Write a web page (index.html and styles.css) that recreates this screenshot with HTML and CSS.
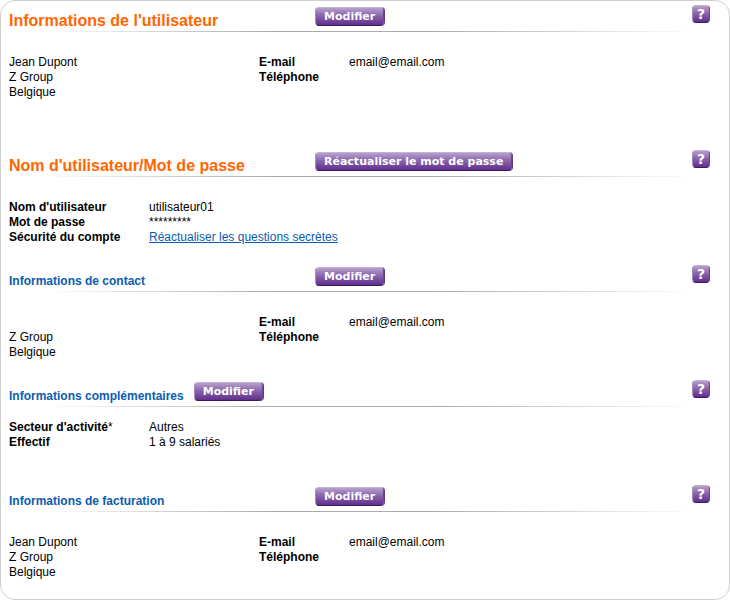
FILE: index.html
```html
<!DOCTYPE html>
<html lang="fr">
<head>
<meta charset="utf-8">
<title>Mon compte</title>
<link rel="stylesheet" href="styles.css">
</head>
<body>
<main class="panel">
  <section class="section section-spaced">
    <header class="head">
      <h1 class="title title-main">Informations de l'utilisateur</h1>
      <button class="btn" type="button">Modifier</button>
      <button class="help" type="button">?</button>
    </header>
    <div class="body contact">
      <address class="address">Jean Dupont<br>Z Group<br>Belgique</address>
      <dl class="pairs pairs-narrow">
        <dt>E-mail</dt><dd>email@email.com</dd>
        <dt>Téléphone</dt><dd></dd>
      </dl>
    </div>
  </section>

  <section class="section">
    <header class="head">
      <h1 class="title title-main">Nom d'utilisateur/Mot de passe</h1>
      <button class="btn" type="button">Réactualiser le mot de passe</button>
      <button class="help" type="button">?</button>
    </header>
    <div class="body">
      <dl class="pairs">
        <dt>Nom d'utilisateur</dt><dd>utilisateur01</dd>
        <dt>Mot de passe</dt><dd>*********</dd>
        <dt>Sécurité du compte</dt><dd><a class="link" href="#">Réactualiser les questions secrètes</a></dd>
      </dl>
    </div>
  </section>

  <section class="section">
    <header class="head">
      <h2 class="title">Informations de contact</h2>
      <button class="btn" type="button">Modifier</button>
      <button class="help" type="button">?</button>
    </header>
    <div class="body contact">
      <address class="address"><br>Z Group<br>Belgique</address>
      <dl class="pairs pairs-narrow">
        <dt>E-mail</dt><dd>email@email.com</dd>
        <dt>Téléphone</dt><dd></dd>
      </dl>
    </div>
  </section>

  <section class="section section-compact">
    <header class="head">
      <h2 class="title title-inline">Informations complémentaires</h2>
      <button class="btn" type="button">Modifier</button>
      <button class="help" type="button">?</button>
    </header>
    <div class="body">
      <dl class="pairs">
        <dt>Secteur d'activité<span class="mark">*</span></dt><dd>Autres</dd>
        <dt>Effectif</dt><dd>1 à 9 salariés</dd>
      </dl>
    </div>
  </section>

  <section class="section">
    <header class="head">
      <h2 class="title">Informations de facturation</h2>
      <button class="btn" type="button">Modifier</button>
      <button class="help" type="button">?</button>
    </header>
    <div class="body contact">
      <address class="address">Jean Dupont<br>Z Group<br>Belgique</address>
      <dl class="pairs pairs-narrow">
        <dt>E-mail</dt><dd>email@email.com</dd>
        <dt>Téléphone</dt><dd></dd>
      </dl>
    </div>
  </section>
</main>
</body>
</html>
```
FILE: styles.css
```css
* {
  box-sizing: border-box;
}

body {
  margin: 0;
  background: #fff;
  color: #000;
  font: 12px/15px "Liberation Sans", Arial, sans-serif;
}

.panel {
  min-height: 100vh;
  padding: 0 19px 4px 8px;
  border: 1px solid #d0d0d0;
  border-radius: 15px;
}

.section {
  padding-bottom: 15px;
}

.section-spaced {
  padding-bottom: 45px;
}

.section-compact {
  padding-bottom: 30px;
}

.head {
  display: flex;
  align-items: flex-start;
  height: 32px;
  padding-top: 5px;
  background: linear-gradient(to right, transparent 5%, #aaa 38%, #aaa 60%, transparent 98%) left bottom / 100% 1px no-repeat;
}

.section:first-child .head {
  height: 31px;
  padding-top: 4px;
}

.title {
  min-width: 306px;
  margin: 0;
  padding-top: 9px;
  color: #0b5cb0;
  font-size: 12px;
  line-height: 15px;
  font-weight: bold;
}

.title-main {
  padding-top: 6px;
  color: #ff6600;
  font-size: 16px;
  line-height: 20px;
}

.title-inline {
  min-width: 0;
  margin-right: 10px;
}

.btn,
.help {
  border: 1px solid;
  border-color: #c3b2d4 #6d4594 #3d1a60 #a58cbd;
  border-radius: 4px;
  background: linear-gradient(#b7a0cd, #8a65ac 45%, #5f2f8c);
  color: #fff;
  cursor: pointer;
}

.btn {
  height: 19px;
  margin-top: 2px;
  padding: 0 8px;
  box-shadow: 1px 0 0 #5d3f7a;
  font: bold 11px/17px "DejaVu Sans", Verdana, sans-serif;
  white-space: nowrap;
}

.help {
  width: 18px;
  height: 18px;
  margin-left: auto;
  padding: 0;
  font: bold 14px/16px "DejaVu Sans", Verdana, sans-serif;
}

.body {
  padding-top: 23px;
}

.section-compact .body {
  padding-top: 13px;
}

.contact {
  display: grid;
  grid-template-columns: 250px 1fr;
}

.address {
  font-style: normal;
}

.pairs {
  display: grid;
  grid-template-columns: 140px 1fr;
  align-content: start;
  margin: 0;
}

.pairs-narrow {
  grid-template-columns: 90px 1fr;
}

.pairs dt {
  font-weight: bold;
}

.pairs dd {
  margin: 0;
}

.mark {
  font-weight: normal;
}

.link {
  color: #0b5cb0;
}
```
